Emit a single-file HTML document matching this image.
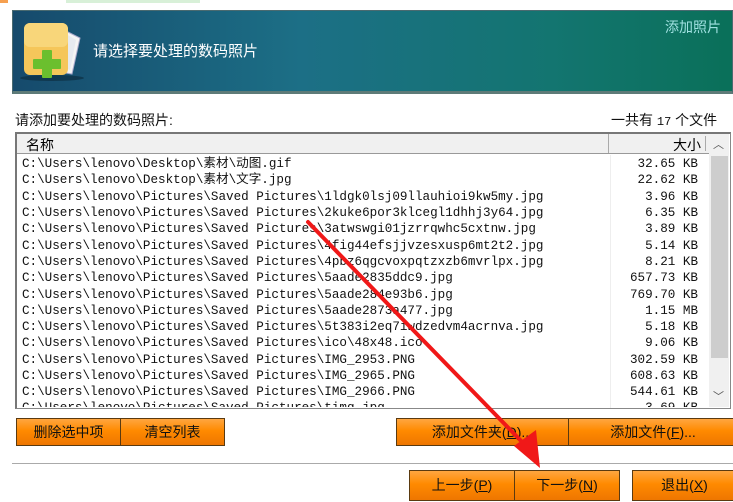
<!DOCTYPE html>
<html><head><meta charset="utf-8"><style>
body{margin:0;width:733px;height:502px;background:#fff;position:relative;overflow:hidden;font-family:"Liberation Sans","Noto Sans CJK SC",sans-serif;}
.abs{position:absolute}
.banner{left:12px;top:10px;width:721px;height:84px;background:linear-gradient(90deg,#164a6c 0%,#1c6f86 40%,#137570 75%,#0a7059 100%);border:1px solid #4a6a70;box-sizing:border-box;border-bottom:3px solid #5e7b78}
.mono{font-family:"Liberation Mono","Noto Sans CJK SC",monospace;font-size:12.6px;color:#111}
.row{position:absolute;left:22px;height:16px;line-height:16px;white-space:pre}
.sz{position:absolute;right:35px;height:16px;line-height:16px;white-space:pre;text-align:right}
.btn{position:absolute;height:28px;background:linear-gradient(#ffa640,#ff8a00 45%,#ee7600);border:1px solid #5a3a10;box-sizing:border-box;font-size:14px;color:#111;text-align:center;line-height:26px;font-family:"Liberation Sans","Noto Sans CJK SC",sans-serif}
</style></head><body>
<div class="abs" style="left:0;top:0;width:733px;height:3px;background:linear-gradient(90deg,#f6a050 0 8px,#fff 8px,#fff 66px,#d8f0d8 66px 200px,#fff 200px)"></div>
<div class="abs banner"></div>
<svg class="abs" style="left:18px;top:18px" width="70" height="66" viewBox="0 0 70 66">
<ellipse cx="34" cy="60" rx="32" ry="3" fill="#0b2a3a" opacity=".6"/>
<path d="M46 12 L62 20 L54 56 L42 54 Z" fill="#f4f4f4" stroke="#aac" stroke-width="1"/>
<path d="M48 16 L58 22 L52 52 L46 50 Z" fill="#e6eaf0"/>
<rect x="6" y="5" width="44" height="52" rx="6" fill="#f5c65a"/>
<rect x="6" y="5" width="44" height="24" rx="6" fill="#f8d67a"/>
<rect x="24" y="32" width="10" height="28" rx="1" fill="#6bbf2e"/>
<rect x="15" y="41" width="28" height="10" rx="1" fill="#6bbf2e"/>
</svg>
<div class="abs" style="left:93px;top:40px;color:#fff;font-size:15px">请选择要处理的数码照片</div>
<div class="abs" style="left:665px;top:17px;color:#9fe0e0;font-size:14px">添加照片</div>
<div class="abs" style="left:15px;top:110px;font-size:14px;color:#111">请添加要处理的数码照片:</div>
<div class="abs" style="left:611px;top:110px;font-size:14px;color:#111">一共有 <span style="font-family:'Liberation Mono';font-size:12px">17</span> 个文件</div>
<div class="abs" style="left:15px;top:132px;width:716px;height:277px;border:1px solid #888;box-sizing:border-box;border-top:2px solid #777;border-left:2px solid #777"></div>
<div class="abs" style="left:17px;top:134px;width:692px;height:19px;background:#f0f0f0;border-bottom:1px solid #999"></div>
<div class="abs" style="left:608px;top:134px;width:1px;height:19px;background:#aaa"></div>
<div class="abs" style="left:705px;top:136px;width:1px;height:15px;background:#aaa"></div>
<div class="abs" style="left:26px;top:135px;font-size:14px">名称</div>
<div class="abs" style="left:673px;top:135px;font-size:14px">大小</div>
<div class="abs" style="left:610px;top:155px;width:1px;height:253px;background:#eee"></div>
<div class="abs" style="left:709px;top:134px;width:20px;height:273px;background:#f0f0f0"></div>
<div class="abs" style="left:711px;top:156px;width:17px;height:202px;background:#cdcdcd"></div>
<div class="abs" style="left:713px;top:136px;font-size:11px;color:#555">︿</div>
<div class="abs" style="left:713px;top:388px;font-size:11px;color:#555">﹀</div>
<div class="mono">
<div class="row" style="top:156px">C:\Users\lenovo\Desktop\素材\动图.gif</div>
<div class="row" style="top:172px">C:\Users\lenovo\Desktop\素材\文字.jpg</div>
<div class="row" style="top:189px">C:\Users\lenovo\Pictures\Saved Pictures\1ldgk0lsj09llauhioi9kw5my.jpg</div>
<div class="row" style="top:205px">C:\Users\lenovo\Pictures\Saved Pictures\2kuke6por3klcegl1dhhj3y64.jpg</div>
<div class="row" style="top:221px">C:\Users\lenovo\Pictures\Saved Pictures\3atwswgi01jzrrqwhc5cxtnw.jpg</div>
<div class="row" style="top:238px">C:\Users\lenovo\Pictures\Saved Pictures\4fig44efsjjvzesxusp6mt2t2.jpg</div>
<div class="row" style="top:254px">C:\Users\lenovo\Pictures\Saved Pictures\4pbz6qgcvoxpqtzxzb6mvrlpx.jpg</div>
<div class="row" style="top:270px">C:\Users\lenovo\Pictures\Saved Pictures\5aade2835ddc9.jpg</div>
<div class="row" style="top:287px">C:\Users\lenovo\Pictures\Saved Pictures\5aade284e93b6.jpg</div>
<div class="row" style="top:303px">C:\Users\lenovo\Pictures\Saved Pictures\5aade2873a477.jpg</div>
<div class="row" style="top:319px">C:\Users\lenovo\Pictures\Saved Pictures\5t383i2eq7iwdzedvm4acrnva.jpg</div>
<div class="row" style="top:335px">C:\Users\lenovo\Pictures\Saved Pictures\ico\48x48.ico</div>
<div class="row" style="top:352px">C:\Users\lenovo\Pictures\Saved Pictures\IMG_2953.PNG</div>
<div class="row" style="top:368px">C:\Users\lenovo\Pictures\Saved Pictures\IMG_2965.PNG</div>
<div class="row" style="top:384px">C:\Users\lenovo\Pictures\Saved Pictures\IMG_2966.PNG</div>
<div style="position:absolute;left:17px;top:400px;width:692px;height:7px;overflow:hidden"><div class="row" style="top:0;left:5px">C:\Users\lenovo\Pictures\Saved Pictures\timg.jpg</div><div class="sz" style="top:0;right:11px">3.69 KB</div></div>
<div class="sz" style="top:156px">32.65 KB</div>
<div class="sz" style="top:172px">22.62 KB</div>
<div class="sz" style="top:189px">3.96 KB</div>
<div class="sz" style="top:205px">6.35 KB</div>
<div class="sz" style="top:221px">3.89 KB</div>
<div class="sz" style="top:238px">5.14 KB</div>
<div class="sz" style="top:254px">8.21 KB</div>
<div class="sz" style="top:270px">657.73 KB</div>
<div class="sz" style="top:287px">769.70 KB</div>
<div class="sz" style="top:303px">1.15 MB</div>
<div class="sz" style="top:319px">5.18 KB</div>
<div class="sz" style="top:335px">9.06 KB</div>
<div class="sz" style="top:352px">302.59 KB</div>
<div class="sz" style="top:368px">608.63 KB</div>
<div class="sz" style="top:384px">544.61 KB</div>
</div>
<div class="btn" style="left:16px;top:418px;width:105px">删除选中项</div>
<div class="btn" style="left:120px;top:418px;width:105px">清空列表</div>
<div class="btn" style="left:396px;top:418px;width:173px">添加文件夹(<u>D</u>)...</div>
<div class="btn" style="left:568px;top:418px;width:170px">添加文件(<u>F</u>)...</div>
<div class="abs" style="left:12px;top:463px;width:721px;height:1px;background:#aaa"></div>
<div class="btn" style="left:409px;top:470px;width:106px;height:31px;line-height:29px">上一步(<u>P</u>)</div>
<div class="btn" style="left:514px;top:470px;width:106px;height:31px;line-height:29px">下一步(<u>N</u>)</div>
<div class="btn" style="left:632px;top:470px;width:105px;height:31px;line-height:29px">退出(<u>X</u>)</div>
<svg class="abs" style="left:0;top:0" width="733" height="502">
<line x1="308" y1="222" x2="528" y2="448" stroke="#f01818" stroke-width="4" stroke-linecap="round"/>
<polygon points="540,468 514,446 536,430" fill="#f01818"/>
</svg>
</body></html>
